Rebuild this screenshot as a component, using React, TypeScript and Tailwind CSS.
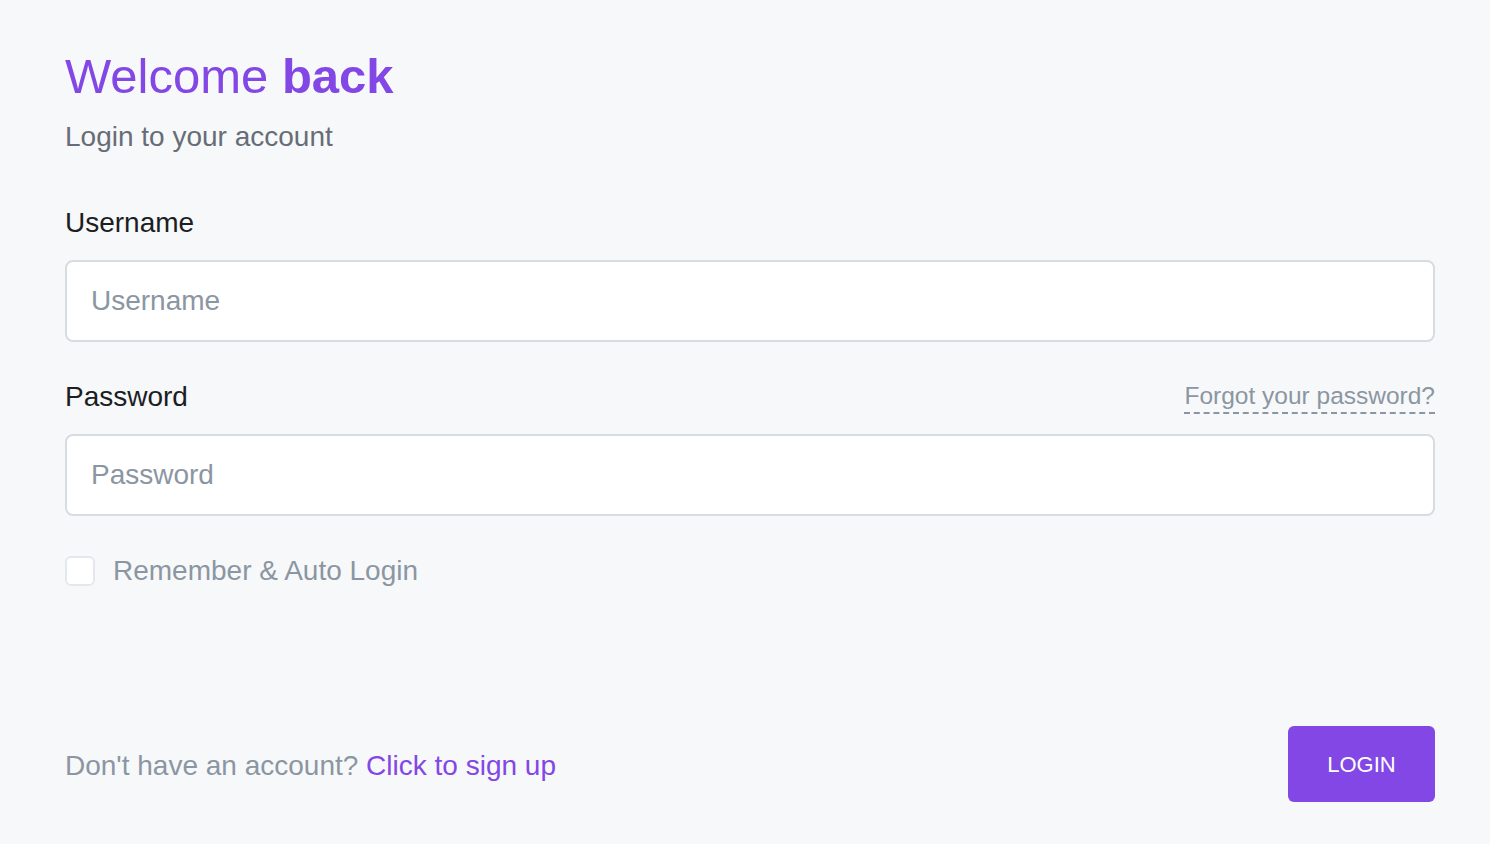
/**
 * Login screen.
 */

export default function App(): JSX.Element {
  return (
    <div
      className="min-h-[844px] bg-[#f7f8fa] pl-[65px] pr-[55px] pt-[48px]"
      style={{ fontFamily: '"Liberation Sans", Arial, sans-serif' }}
    >
      {/* Heading */}
      <h1 className="text-[49px] leading-[56px] text-[#8347e5]">
        Welcome <span className="font-bold">back</span>
      </h1>
      <p className="mt-[15px] text-[28px] leading-[36px] text-[#666d77]">Login to your account</p>

      {/* Username */}
      <label className="mt-[50px] block text-[28px] leading-[36px] text-[#1b1e23]">Username</label>
      <input
        type="text"
        placeholder="Username"
        className="mt-[19px] block h-[82px] w-full rounded-[8px] border-2 border-[#d8dce2] bg-white px-6 text-[28px] text-[#1b1e23] placeholder:text-[#8b96a2] outline-none"
      />

      {/* Password */}
      <div className="mt-[37px] flex items-center justify-between">
        <label className="text-[28px] leading-[36px] text-[#1b1e23]">Password</label>
        <a
          href="#"
          className="mt-[2px] border-b-2 border-dashed border-[#8b96a2] pb-[2px] text-[24.5px] leading-[28px] text-[#8b96a2]"
        >
          Forgot your password?
        </a>
      </div>
      <input
        type="password"
        placeholder="Password"
        className="mt-[19px] block h-[82px] w-full rounded-[8px] border-2 border-[#d8dce2] bg-white px-6 text-[28px] text-[#1b1e23] placeholder:text-[#8b96a2] outline-none"
      />

      {/* Remember */}
      <label className="mt-[37px] flex items-center gap-[18px]">
        <span className="h-[30px] w-[30px] rounded-[6px] border-2 border-[#e4e7ed] bg-white" />
        <span className="text-[28px] leading-[36px] text-[#8b96a2]">Remember &amp; Auto Login</span>
      </label>

      {/* Footer */}
      <div className="mt-[137px] flex items-center justify-between">
        <p className="mt-[3px] text-[28px] leading-[36px] text-[#8b96a2]">
          Don't have an account? <a href="#" className="text-[#8347e5]">Click to sign up</a>
        </p>
        <button className="h-[76px] w-[147px] rounded-[6px] bg-[#8347e5] text-[22px] text-white">LOGIN</button>
      </div>
    </div>
  );
}
